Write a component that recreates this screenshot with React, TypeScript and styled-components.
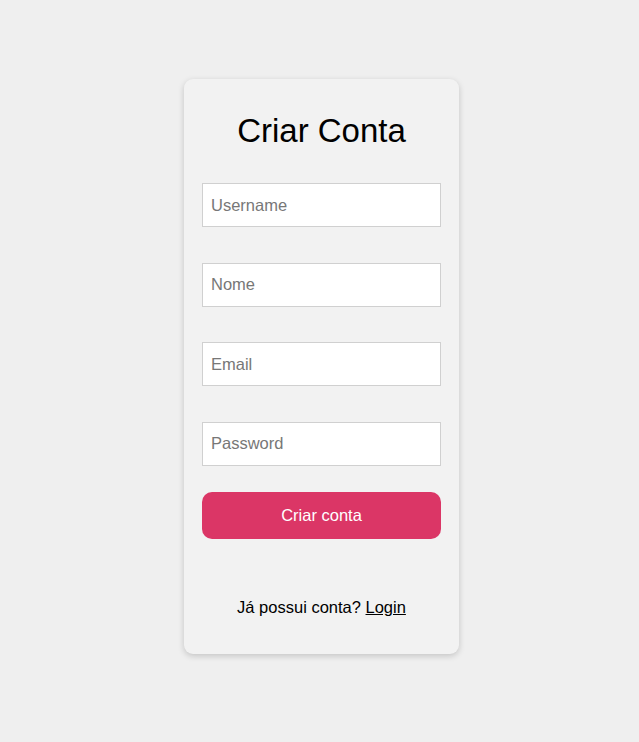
import React from "react";
import styled, { createGlobalStyle } from "styled-components";

const Global = createGlobalStyle`
  html, body { margin: 0; padding: 0; }
  body {
    background: #efefef;
    font-family: "Liberation Sans", Arial, sans-serif;
  }
`;

const Page = styled.div`
  display: flex;
  justify-content: center;
  padding: 79px 0 0 4px;
  min-height: 742px;
  box-sizing: border-box;
`;

const Card = styled.div`
  width: 275px;
  box-sizing: border-box;
  background: #f2f2f2;
  border-radius: 9px;
  box-shadow: 0 2px 6px rgba(0, 0, 0, 0.18);
  padding: 33px 18px 37px;
  display: flex;
  flex-direction: column;
  align-self: flex-start;
`;

const Title = styled.h1`
  margin: 0 0 33px;
  font-size: 33px;
  font-weight: 400;
  line-height: 38px;
  text-align: center;
  color: #000;
`;

const Form = styled.form`
  display: flex;
  flex-direction: column;
`;

const Fields = styled.div`
  display: flex;
  flex-direction: column;
  gap: 35.5px;
`;

const Input = styled.input`
  height: 44px;
  box-sizing: border-box;
  border: 1px solid #d0d0d0;
  background: #fff;
  padding: 0 8px;
  font-family: "Liberation Sans", Arial, sans-serif;
  font-size: 16.5px;
  color: #222;
  outline: none;
  &::placeholder {
    color: #777;
  }
`;

const Button = styled.button`
  margin-top: 26px;
  height: 47px;
  border: none;
  border-radius: 10px;
  background: #db3666;
  color: #fff;
  font-family: "Liberation Sans", Arial, sans-serif;
  font-size: 16.5px;
  cursor: pointer;
`;

const Footer = styled.p`
  margin: 59px 0 0;
  text-align: center;
  font-size: 16.5px;
  line-height: 19px;
  color: #000;
`;

const LoginLink = styled.a`
  color: #000;
  text-decoration: underline;
`;

export default function App() {
  return (
    <>
      <Global />
      <Page>
        <Card>
          <Title>Criar Conta</Title>
          <Form onSubmit={(e) => e.preventDefault()}>
            <Fields>
              <Input type="text" placeholder="Username" />
              <Input type="text" placeholder="Nome" />
              <Input type="email" placeholder="Email" />
              <Input type="password" placeholder="Password" />
            </Fields>
            <Button type="submit">Criar conta</Button>
          </Form>
          <Footer>
            Já possui conta? <LoginLink href="#">Login</LoginLink>
          </Footer>
        </Card>
      </Page>
    </>
  );
}
